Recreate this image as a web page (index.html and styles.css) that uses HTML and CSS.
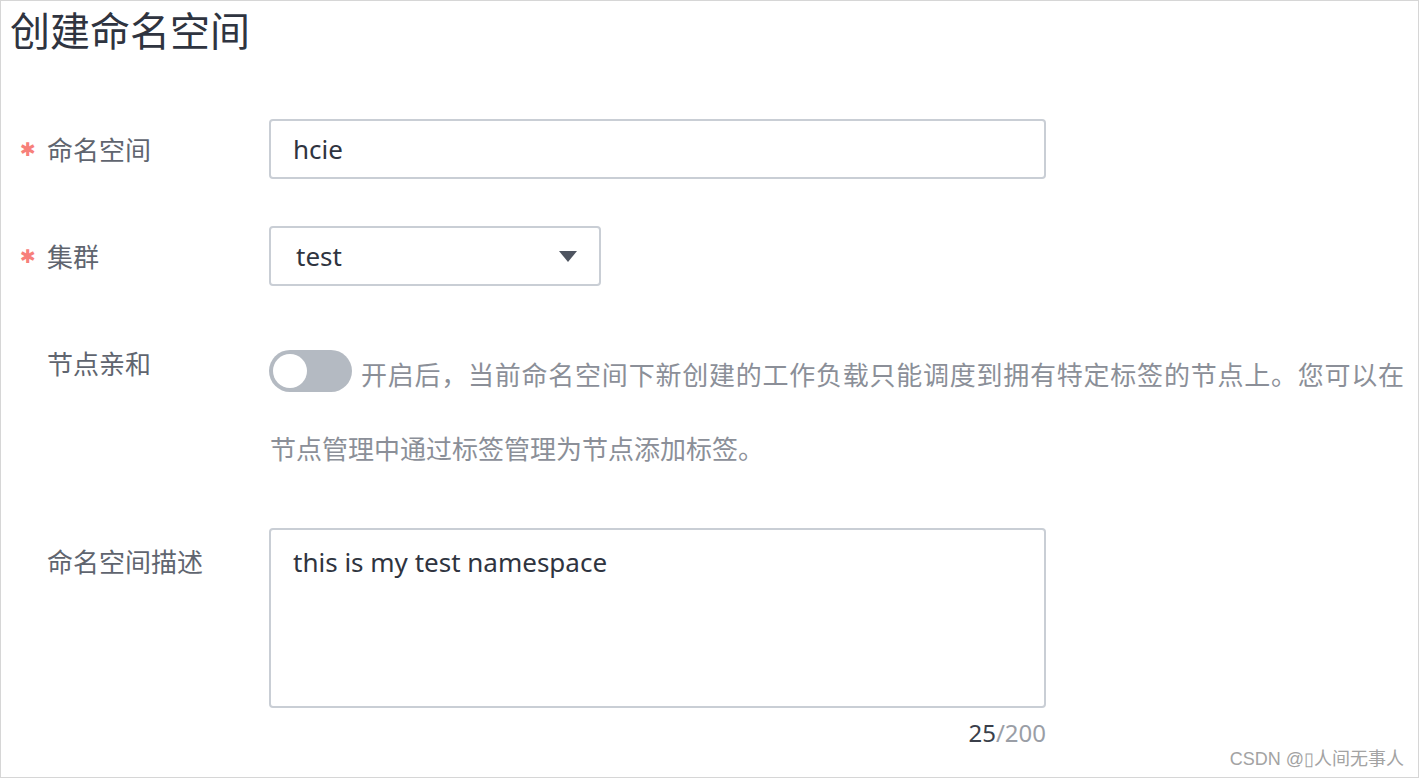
FILE: index.html
```html
<!DOCTYPE html>
<html lang="zh-CN">
<head>
<meta charset="utf-8">
<title>创建命名空间</title>
<link rel="stylesheet" href="styles.css">
</head>
<body>
<div class="page">
  <h1 class="title">创建命名空间</h1>
  <div class="form">
    <div class="row row-center">
      <div class="label required"><span class="star">✱</span>命名空间</div>
      <div class="field">
        <input class="input wide" type="text" value="hcie" readonly>
      </div>
    </div>
    <div class="row row-center row-select">
      <div class="label required"><span class="star">✱</span>集群</div>
      <div class="field">
        <div class="select">
          <span class="select-value">test</span>
          <svg class="caret" width="18" height="11" viewBox="0 0 18 11"><path d="M0 0 H18 L9 11 Z" fill="#4e5460"/></svg>
        </div>
      </div>
    </div>
    <div class="row row-affinity">
      <div class="label plain label-top">节点亲和</div>
      <div class="field help">
        <div class="help-line1">
          <span class="switch"><span class="knob"></span></span>
          <span class="help-text justified">开启后，当前命名空间下新创建的工作负载只能调度到拥有特定标签的节点上。您可以在</span>
        </div>
        <div class="help-line2">节点管理中通过标签管理为节点添加标签。</div>
      </div>
    </div>
    <div class="row row-desc">
      <div class="label plain label-desc">命名空间描述</div>
      <div class="field">
        <textarea class="textarea" readonly>this is my test namespace</textarea>
        <div class="counter"><span class="count">25</span>/200</div>
      </div>
    </div>
  </div>
  <div class="watermark">CSDN @▯人间无事人</div>
</div>
</body>
</html>
```
FILE: styles.css
```css
* { box-sizing: border-box; }
html, body { margin: 0; padding: 0; background: #ffffff; }
body {
  font-family: "Noto Sans", "Noto Sans CJK SC", sans-serif;
  color: #252b3a;
}
.page {
  position: relative;
  width: 1419px;
  height: 778px;
  border: 1px solid #d6d6d6;
  background: #ffffff;
  overflow: hidden;
}
.title {
  margin: 0;
  padding-left: 9px;
  font-family: "Noto Sans CJK SC", sans-serif;
  font-weight: 400;
  font-size: 40px;
  line-height: 56px;
  color: #2f3440;
}
.form { margin-top: 62px; }
.row { display: flex; }
.row-center { align-items: center; }
.row-select { margin-top: 47px; }
.row-affinity { margin-top: 64px; align-items: flex-start; }
.row-desc { margin-top: 65px; align-items: flex-start; }
.label {
  width: 268px;
  flex: none;
  display: flex;
  align-items: center;
  font-family: "Noto Sans CJK SC", sans-serif;
  font-size: 26px;
  line-height: 30px;
  color: #60656f;
}
.label.required { padding-left: 19px; }
.label.plain { padding-left: 46px; }
.star {
  display: inline-block;
  width: 27px;
  color: #f7807a;
  font-family: "DejaVu Sans", sans-serif;
  font-size: 19px;
  line-height: 30px;
}
.label-top { margin-top: -2px; }
.label-desc { margin-top: 18px; }
.field { flex: none; }
.input {
  display: block;
  width: 777px;
  height: 60px;
  border: 2px solid #c9ced5;
  border-radius: 4px;
  padding: 0 22px;
  font-family: "Noto Sans", sans-serif;
  font-size: 26px;
  color: #2f3440;
  background: #fff;
  outline: none;
}
.select {
  display: flex;
  align-items: center;
  justify-content: space-between;
  width: 332px;
  height: 60px;
  border: 2px solid #c9ced5;
  border-radius: 4px;
  padding: 0 22px 0 25px;
  font-size: 26px;
  color: #2f3440;
}
.caret { display: block; }
.help {
  width: 1136px;
  font-family: "Noto Sans CJK SC", sans-serif;
  font-size: 26px;
  color: #8b8f98;
}
.help-line1 {
  display: flex;
  align-items: center;
  height: 42px;
}
.switch {
  flex: none;
  display: flex;
  align-items: center;
  width: 83px;
  height: 42px;
  border-radius: 21px;
  background: #b4bac2;
  padding-left: 4px;
}
.knob {
  width: 34px;
  height: 34px;
  border-radius: 50%;
  background: #ffffff;
}
.help-text {
  flex: 1;
  min-width: 0;
  margin-left: 9px;
  margin-right: 1px;
  line-height: 42px;
  position: relative;
  top: 3px;
}
.justified {
  text-align: justify;
  text-align-last: justify;
  white-space: nowrap;
}
.help-line2 {
  margin-top: 41px;
  line-height: 30px;
  padding-left: 1px;
}
.textarea {
  display: block;
  width: 777px;
  height: 180px;
  border: 2px solid #c9ced5;
  border-radius: 4px;
  padding: 15px 22px;
  font-family: "Noto Sans", sans-serif;
  font-size: 26px;
  line-height: 34px;
  color: #2f3440;
  resize: none;
  outline: none;
  background: #fff;
}
.counter {
  width: 777px;
  margin-top: 10px;
  text-align: right;
  font-family: "Noto Sans", sans-serif;
  font-size: 24px;
  line-height: 30px;
  color: #9a9ea6;
}
.count { color: #3a3f4a; }
.watermark {
  position: absolute;
  right: 14px;
  bottom: 7px;
  font-family: "Liberation Sans", "Noto Sans CJK SC", sans-serif;
  font-size: 18px;
  line-height: 22px;
  color: #a3a3a3;
}
```
